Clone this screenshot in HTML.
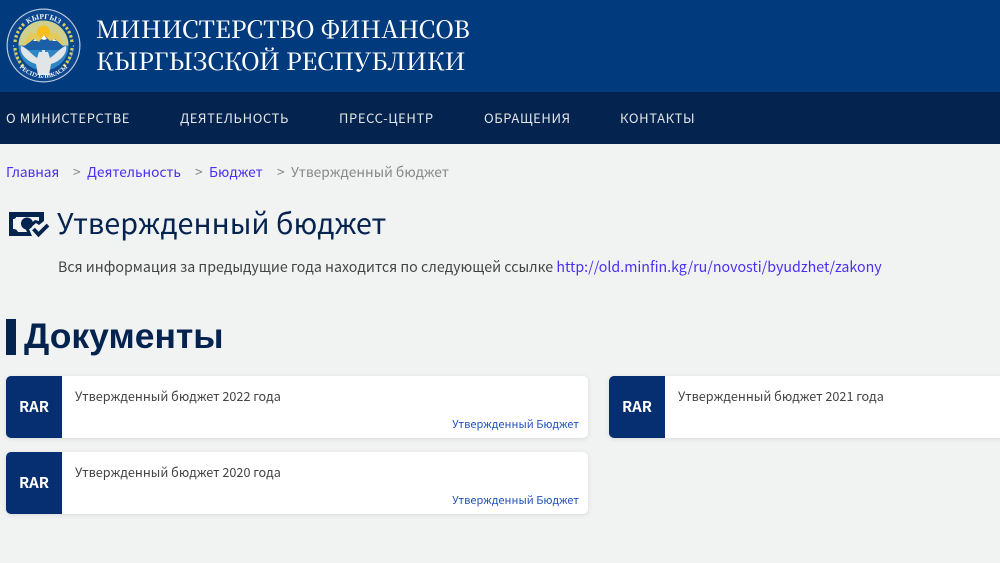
<!DOCTYPE html>
<html lang="ru"><head><meta charset="utf-8"><title>Утвержденный бюджет</title>
<style>
html,body{margin:0;padding:0}
body{width:1000px;height:563px;overflow:hidden;position:relative;background:#f1f2f2;font-family:"Noto Sans CJK JP","Liberation Sans",sans-serif}
.a{position:absolute;white-space:nowrap;line-height:1}
.hdr{position:absolute;left:0;top:0;width:1000px;height:92px;background:#023a7e}
.nav{position:absolute;left:0;top:92px;width:1000px;height:52px;background:#04244f}
.n{color:#e4e6e8;font-size:13px;letter-spacing:.62px;top:111px}
.t{color:#fff;font-family:"Noto Serif CJK SC","Liberation Serif",serif;font-size:24.2px;font-weight:500}
.b{font-size:13.75px;top:165px;color:#4a2ff0}
.s{font-size:13.8px;top:165px;color:#888}
.card{position:absolute;height:62px;background:#fff;border-radius:5px;box-shadow:0 1px 5px rgba(0,0,0,.1);overflow:hidden}
.rar{position:absolute;left:0;top:0;width:56px;height:62px;background:#052f70;color:#fff;font-weight:700;font-size:15px;line-height:62px;text-align:center}
.ct{position:absolute;left:69px;top:12px;font-size:12.65px;line-height:16px;color:#444;white-space:nowrap}
.cl{position:absolute;right:9px;top:41px;font-size:11.05px;line-height:14px;color:#2350b8;white-space:nowrap}
</style></head><body>
<div class="hdr"></div><div class="nav"></div>
<svg class="a" style="left:6px;top:8px" width="75" height="75" viewBox="0 0 75 75">
<defs><path id="tp" d="M11 37.500A26.500 26.500 0 0 1 64 37.500"/><path id="bp" d="M5 37.500A32.500 32.500 0 0 0 70 37.500"/></defs>
<circle cx="37.500" cy="37.500" r="37" fill="#b9c8dc"/><circle cx="37.500" cy="37.500" r="35.800" fill="#0c468f"/>
<circle cx="37.500" cy="37.500" r="25" fill="#2f86c4"/>
<path d="M12.500 37.500A25 25 0 0 1 62.500 37.500Z" fill="#cfd08e"/>
<path d="M18 36L24 24 29 26 37 19 46 26 51 24 57 36Z" fill="#e3c95a"/>
<circle cx="37.500" cy="24" r="6.500" fill="#f9bd1c"/>
<path d="M17 39L28 31 33 34 38 27 44 33 49 31 58 39V42H17Z" fill="#1a5fa8"/>
<path d="M35 31l3-4 3 4-3 1zM27 33l2-2 2 2zM46 33l2-2 3 2z" fill="#fff"/>
<path d="M15 38C19 39 24 44 27 47L31 50 33 44H42L44 50 48 47C51 44 56 39 60 38C62 46 53 54 45 56L43 67H32L30 56C22 54 13 46 15 38Z" fill="#e1e5e7"/>
<path d="M36 42H39V50H36Z" fill="#e1e5e7"/>
<path d="M9 40A29 29 0 0 0 19 60M66 40A29 29 0 0 1 56 60M9 34A29 29 0 0 1 19 15M66 34A29 29 0 0 0 56 15" fill="none" stroke="#d9cb62" stroke-width="3.200" stroke-dasharray="2.500 2"/>
<path d="M7.500 37A30 30 0 0 0 13 54M67.500 37A30 30 0 0 1 62 54" fill="none" stroke="#5ea0d6" stroke-width="1.200" stroke-dasharray="2 3"/>
<text font-family="Liberation Serif,serif" font-size="7.500" font-weight="700" fill="#f3f5f8" text-anchor="middle"><textPath href="#tp" startOffset="50%">КЫРГЫЗ</textPath></text>
<text font-family="Liberation Serif,serif" font-size="6.200" font-weight="700" fill="#f3f5f8" text-anchor="middle"><textPath href="#bp" startOffset="50%">РЕСПУБЛИКАСЫ</textPath></text>
</svg>
<div class="a t" style="left:96px;top:16px">МИНИСТЕРСТВО ФИНАНСОВ</div>
<div class="a t" style="left:96px;top:48px;letter-spacing:-.09px">КЫРГЫЗСКОЙ РЕСПУБЛИКИ</div>
<div class="a n" style="left:6px">О МИНИСТЕРСТВЕ</div>
<div class="a n" style="left:180px">ДЕЯТЕЛЬНОСТЬ</div>
<div class="a n" style="left:339px">ПРЕСС-ЦЕНТР</div>
<div class="a n" style="left:484px">ОБРАЩЕНИЯ</div>
<div class="a n" style="left:620px">КОНТАКТЫ</div>
<div class="a b" style="left:6px;letter-spacing:-.1px">Главная</div><div class="a s" style="left:73px">&gt;</div>
<div class="a b" style="left:87px">Деятельность</div><div class="a s" style="left:195px">&gt;</div>
<div class="a b" style="left:209px;letter-spacing:.1px">Бюджет</div><div class="a s" style="left:277px">&gt;</div>
<div class="a s" style="left:291px">Утвержденный бюджет</div>
<svg class="a" style="left:8px;top:212px" width="42" height="27" viewBox="0 0 42 27">
<path fill-rule="evenodd" d="M1 0H36V9L31 13 28 11 21 17 24 24H1ZM5 7V17C8 17 9 18 10 20H19L17 16 27 8 31 9V5H8C8 6 7 7 5 7Z" fill="#05234f"/>
<circle cx="19" cy="11.500" r="6" fill="#05234f"/>
<path d="M25.500 17l5 5.500 9.500-9.500" fill="none" stroke="#05234f" stroke-width="3.800"/>
</svg>
<div class="a" style="left:57px;top:209px;font-size:28.8px;color:#05234f">Утвержденный бюджет</div>
<div class="a" style="left:58px;top:260px;font-size:14.22px;color:#444">Вся информация за предыдущие года находится по следующей ссылке <span style="color:#4a2ff0">http://old.minfin.kg/ru/novosti/byudzhet/zakony</span></div>
<div class="a" style="left:6px;top:319px;width:10px;height:36px;background:#05234f"></div>
<div class="a" style="left:24px;top:319px;font-family:'Liberation Sans',sans-serif;font-weight:700;font-size:35.5px;color:#05234f">Документы</div>
<div class="card" style="left:6px;top:376px;width:582px"><div class="rar">RAR</div><div class="ct">Утвержденный бюджет 2022 года</div><div class="cl">Утвержденный Бюджет</div></div>
<div class="card" style="left:609px;top:376px;width:420px"><div class="rar">RAR</div><div class="ct">Утвержденный бюджет 2021 года</div></div>
<div class="card" style="left:6px;top:452px;width:582px"><div class="rar">RAR</div><div class="ct">Утвержденный бюджет 2020 года</div><div class="cl">Утвержденный Бюджет</div></div>
</body></html>
